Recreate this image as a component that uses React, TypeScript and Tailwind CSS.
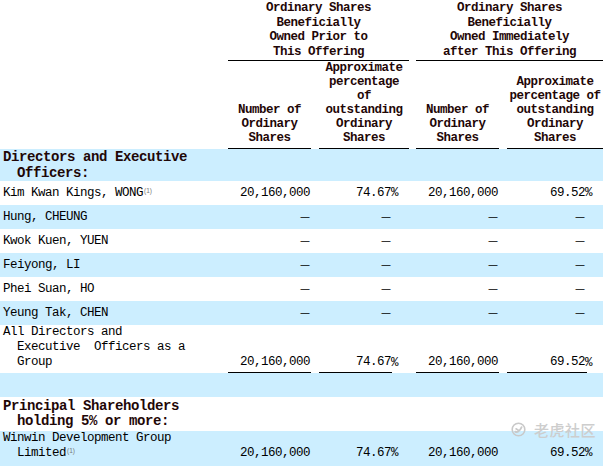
import React from 'react';

type V = string | 'dash' | '';

function Dash() {
  return <span className="[font-family:'DejaVu_Sans',sans-serif] text-[10px] tracking-normal leading-none">—</span>;
}

function Sup() {
  return (
    <span className="relative -top-[3px] ml-[1px] text-[6.5px] tracking-normal leading-none text-[#777] [font-family:'Liberation_Sans',sans-serif]">
      (1)
    </span>
  );
}

function NumCell({
  w,
  pr,
  align,
  pb,
  line,
  children,
}: {
  w: string;
  pr: string;
  align: string;
  pb: string;
  line: boolean;
  children: React.ReactNode;
}) {
  return (
    <div className={`${w} shrink-0 flex flex-col`}>
      <div className={`flex-1 flex justify-end ${pr} ${align} ${pb}`}>{children}</div>
      {line ? <div className="h-[1px] shrink-0 bg-black" /> : null}
    </div>
  );
}

function Row({
  bg,
  h,
  name,
  vals,
  align,
  cellPb = '',
  line = false,
  nameCls = '',
}: {
  bg: string;
  h: string;
  name: React.ReactNode;
  vals: [V, V, V, V];
  align: string;
  cellPb?: string;
  line?: boolean;
  nameCls?: string;
}) {
  const cell = (v: V) => (v === 'dash' ? <Dash /> : v);
  const pct = (v: V) => (v && v !== 'dash' ? '%' : '');
  return (
    <div className={`flex w-[603px] ${h} ${bg}`}>
      <div className={`w-[228px] shrink-0 pl-[17px] indent-[-14px] ${nameCls}`}>{name}</div>
      <NumCell w="w-[83px]" pr="pr-[1px]" align={align} pb={cellPb} line={line}>
        {cell(vals[0])}
      </NumCell>
      <div className="w-[8px] shrink-0" />
      <NumCell w="w-[73px]" pr="pr-[1px]" align={align} pb={cellPb} line={line}>
        {cell(vals[1])}
      </NumCell>
      <div className={`w-[17px] shrink-0 flex justify-start ${align} ${cellPb}`}>
        <span className="ml-[-1px]">{pct(vals[1])}</span>
      </div>
      <div className="w-[7px] shrink-0" />
      <NumCell w="w-[83px]" pr="pr-[1px]" align={align} pb={cellPb} line={line}>
        {cell(vals[2])}
      </NumCell>
      <div className="w-[8px] shrink-0" />
      <NumCell w="w-[80px]" pr="pr-[2px]" align={align} pb={cellPb} line={line}>
        {cell(vals[3])}
      </NumCell>
      <div className={`w-[16px] shrink-0 flex justify-start ${align} ${cellPb}`}>
        <span className="ml-[-2px]">{pct(vals[3])}</span>
      </div>
    </div>
  );
}

const BLUE = 'bg-[#cceeff]';
const WHITE = 'bg-white';
const DASHES: [V, V, V, V] = ['dash', 'dash', 'dash', 'dash'];
const FULL: [V, V, V, V] = ['20,160,000', '74.67', '20,160,000', '69.52'];
const EMPTY: [V, V, V, V] = ['', '', '', ''];

export default function App() {
  const hd = 'font-bold text-[#1f0707] text-[12.5px] tracking-[-0.5px]';
  const sec = 'font-bold text-[#1f0707] text-[14px] tracking-[-0.4px]';
  return (
    <div className="relative w-[608px] h-[466px] overflow-hidden bg-white text-black [font-family:'Liberation_Mono',monospace] text-[12.5px] tracking-[-0.5px] leading-[15px]">
      {/* group headers */}
      <div className="flex w-[603px] h-[61px]">
        <div className="w-[228px] shrink-0" />
        <div className={`w-[181px] shrink-0 h-[61px] border-b border-black text-center pt-[1px] leading-[14.5px] ${hd}`}>
          Ordinary Shares
          <br />
          Beneficially
          <br />
          Owned Prior to
          <br />
          This Offering
        </div>
        <div className="w-[7px] shrink-0" />
        <div className={`w-[187px] shrink-0 h-[61px] border-b border-black text-center pt-[1px] leading-[14.5px] ${hd}`}>
          Ordinary Shares
          <br />
          Beneficially
          <br />
          Owned Immediately
          <br />
          after This Offering
        </div>
      </div>
      {/* sub headers */}
      <div className={`flex w-[603px] h-[88px] items-stretch leading-[14px] ${hd}`}>
        <div className="w-[228px] shrink-0" />
        <div className="w-[83px] shrink-0 flex flex-col justify-end text-center pb-[3px] border-b border-black">
          <div>
            Number of
            <br />
            Ordinary
            <br />
            Shares
          </div>
        </div>
        <div className="w-[8px] shrink-0" />
        <div className="w-[90px] shrink-0 flex flex-col justify-end text-center pb-[3px] border-b border-black">
          <div>
            Approximate
            <br />
            percentage
            <br />
            of
            <br />
            outstanding
            <br />
            Ordinary
            <br />
            Shares
          </div>
        </div>
        <div className="w-[7px] shrink-0" />
        <div className="w-[83px] shrink-0 flex flex-col justify-end text-center pb-[3px] border-b border-black">
          <div>
            Number of
            <br />
            Ordinary
            <br />
            Shares
          </div>
        </div>
        <div className="w-[8px] shrink-0" />
        <div className="w-[96px] shrink-0 flex flex-col justify-end text-center pb-[3px] border-b border-black">
          <div>
            Approximate
            <br />
            percentage of
            <br />
            outstanding
            <br />
            Ordinary
            <br />
            Shares
          </div>
        </div>
      </div>

      <Row
        bg={BLUE}
        h="h-[32px]"
        align="items-center"
        nameCls={`${sec} leading-[16px]`}
        name={
          <>
            Directors and Executive
            <br />
            Officers:
          </>
        }
        vals={EMPTY}
      />
      <Row
        bg={WHITE}
        h="h-[24px]"
        align="items-center"
        nameCls="flex items-center"
        name={
          <span>
            Kim Kwan Kings, WONG
            <Sup />
          </span>
        }
        vals={FULL}
      />
      <Row bg={BLUE} h="h-[24px]" align="items-center" nameCls="flex items-center" name="Hung, CHEUNG" vals={DASHES} />
      <Row bg={WHITE} h="h-[24px]" align="items-center" nameCls="flex items-center" name="Kwok Kuen, YUEN" vals={DASHES} />
      <Row bg={BLUE} h="h-[24px]" align="items-center" nameCls="flex items-center" name="Feiyong, LI" vals={DASHES} />
      <Row bg={WHITE} h="h-[24px]" align="items-center" nameCls="flex items-center" name="Phei Suan, HO" vals={DASHES} />
      <Row bg={BLUE} h="h-[24px]" align="items-center" nameCls="flex items-center" name="Yeung Tak, CHEN" vals={DASHES} />
      <Row
        bg={WHITE}
        h="h-[48px]"
        align="items-end"
        cellPb="pb-[2px]"
        line={true}
        name={
          <span className="whitespace-pre-wrap">
            {'All Directors and'}
            <br />
            {'Executive  Officers as a'}
            <br />
            {'Group'}
          </span>
        }
        vals={FULL}
      />
      <Row bg={BLUE} h="h-[24px]" align="items-center" name="" vals={EMPTY} />
      <Row
        bg={WHITE}
        h="h-[34px]"
        align="items-center"
        nameCls={`${sec} pt-[2px] leading-[15px]`}
        name={
          <>
            Principal Shareholders
            <br />
            holding 5% or more:
          </>
        }
        vals={EMPTY}
      />
      <Row
        bg={BLUE}
        h="h-[36px]"
        align="items-end"
        cellPb="pb-[6px]"
        name={
          <>
            Winwin Development Group
            <br />
            Limited
            <Sup />
          </>
        }
        vals={FULL}
      />

      {/* watermark */}
      <div className="absolute left-[511px] top-[422px] flex items-center gap-[8px] pointer-events-none">
        <svg width="15" height="15" viewBox="0 0 15 15" fill="none">
          <circle cx="7.5" cy="7.5" r="6.3" stroke="#c9c9c9" strokeWidth="1.6" />
          <path d="M4.2 9.6 C6 10.6 8.6 9.8 10.6 5.2" stroke="#c9c9c9" strokeWidth="1.8" strokeLinecap="round" />
          <path d="M5 6.8 L7.3 8.2" stroke="#c9c9c9" strokeWidth="1.6" strokeLinecap="round" />
        </svg>
        <span className="[font-family:'Noto_Sans_CJK_SC',sans-serif] text-[15px] leading-none font-medium tracking-[0.5px] text-[#cdcdcd]">
          老虎社区
        </span>
      </div>
    </div>
  );
}
